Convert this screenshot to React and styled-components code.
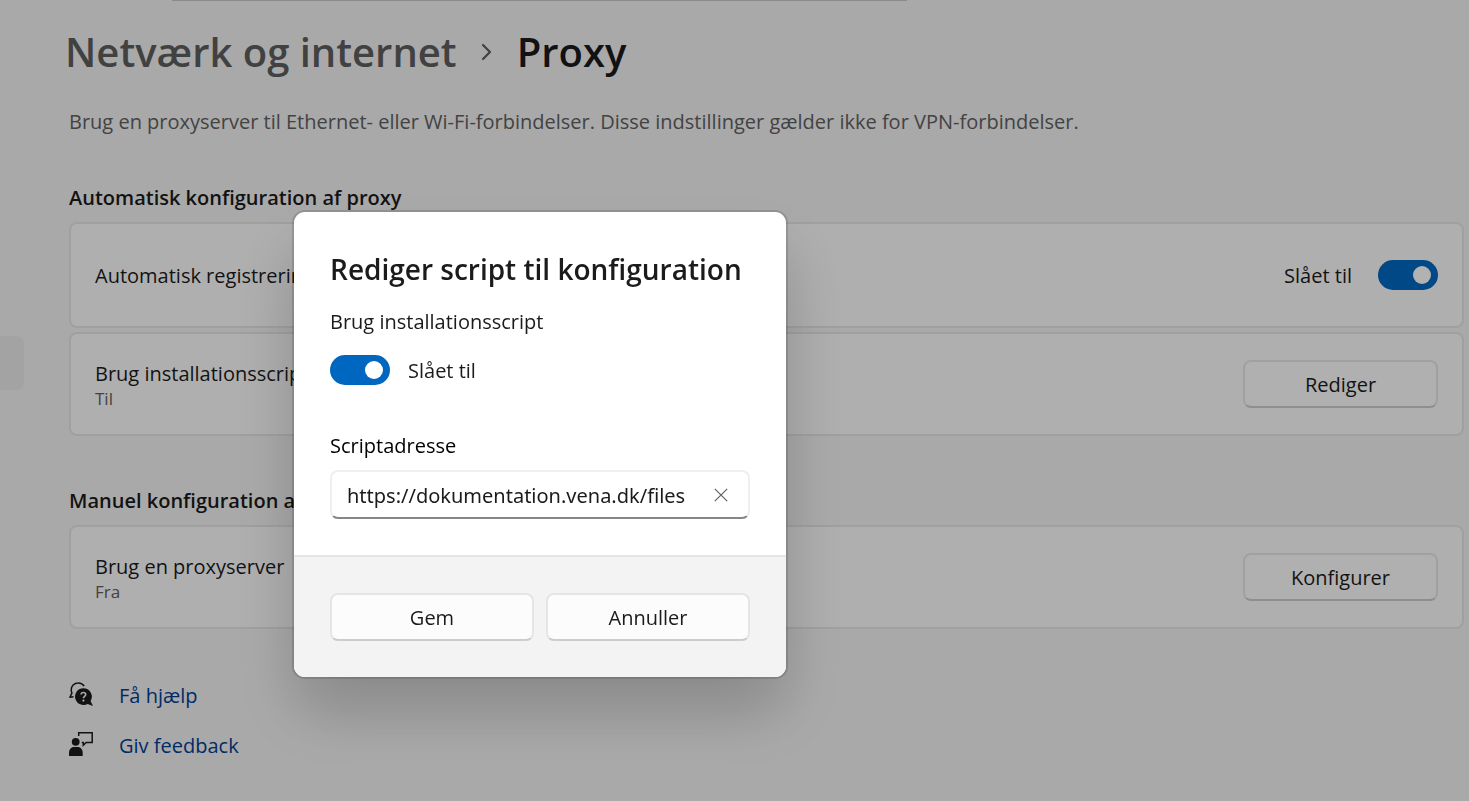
import React, { useState } from 'react';
import styled, { createGlobalStyle, css } from 'styled-components';

const GlobalStyle = createGlobalStyle`
  * {
    box-sizing: border-box;
  }

  body {
    margin: 0;
    background: #f3f3f3;
    color: #1b1b1b;
    font-family: 'Open Sans', 'Noto Sans', sans-serif;
    font-size: 20px;
    line-height: 28px;
  }

  button,
  input {
    font: inherit;
    color: inherit;
  }
`;

const Shell = styled.div`
  display: grid;
  grid-template-columns: 24px minmax(0, 1fr);
  grid-template-rows: 1px 1fr;
  min-height: 100vh;
  overflow: hidden;
`;

const SearchEdge = styled.div`
  grid-column: 1 / -1;
  width: 50%;
  margin-left: 172px;
  background: #c6c6c6;
`;

const Sidebar = styled.nav`
  padding-top: 335px;
`;

const SidebarItem = styled.div`
  height: 54px;
  border-radius: 0 8px 8px 0;
  background: #eaeaea;
`;

const Main = styled.main`
  padding: 23px 5px 16px 45px;
`;

const Breadcrumb = styled.h1`
  display: flex;
  align-items: center;
  gap: 24px;
  margin: 0 0 28px -4px;
  font-size: 40px;
  font-weight: 600;
  line-height: 56px;

  a {
    color: #5e5e5e;
    text-decoration: none;
  }
`;

const Description = styled.p`
  margin: 0 0 48px;
  color: #606060;
`;

const Section = styled.section`
  margin-bottom: 51px;
`;

const SectionTitle = styled.h2`
  margin: 0 0 10px;
  font-size: 20px;
  font-weight: 600;
  line-height: 28px;
`;

const CardList = styled.div`
  display: flex;
  flex-direction: column;
  gap: 4px;
`;

const Card = styled.div`
  display: flex;
  align-items: center;
  justify-content: space-between;
  min-height: ${({ $tall }) => ($tall ? '106px' : '104px')};
  padding: 24px;
  border: 2px solid #e5e5e5;
  border-radius: 8px;
  background: #fbfbfb;
`;

const CardText = styled.div`
  padding-top: 2px;
`;

const CardSub = styled.div`
  color: #606060;
  font-size: 17px;
  line-height: 22px;
`;

const SwitchLabel = styled.label`
  display: flex;
  align-items: center;
  gap: ${({ $gap }) => $gap};
`;

const SwitchText = styled.span`
  padding-top: 2px;
`;

const Switch = styled.input`
  display: flex;
  align-items: center;
  width: 60px;
  height: 30px;
  margin: 0;
  padding: 0 7px;
  border-radius: 15px;
  background: #8a8a8a;
  appearance: none;
  cursor: pointer;

  &::before {
    content: '';
    width: 18px;
    height: 18px;
    border-radius: 50%;
    background: #ffffff;
  }

  &:checked {
    justify-content: flex-end;
    background: #0067c0;
  }
`;

const buttonLook = css`
  height: 48px;
  padding: 1px 12px 0;
  border: 2px solid #e5e5e5;
  border-bottom-color: #cccccc;
  border-radius: 8px;
  background: #fcfcfc;
  cursor: pointer;
`;

const CardButton = styled.button`
  ${buttonLook}
  width: 195px;
`;

const HelpLinks = styled.div`
  display: flex;
  flex-direction: column;
  gap: 22px;
  padding-top: 2px;
`;

const HelpLink = styled.a`
  display: flex;
  align-items: flex-start;
  gap: 26px;
  width: max-content;
  color: #003e92;
  text-decoration: none;

  svg {
    color: #1b1b1b;
  }
`;

const Overlay = styled.div`
  position: fixed;
  inset: 0;
  padding: 212px 0 0 294px;
  background: rgba(0, 0, 0, 0.3);
`;

const Dialog = styled.form`
  width: 492px;
  overflow: hidden;
  border-radius: 11px;
  background: #ffffff;
  box-shadow:
    0 0 0 2px rgba(0, 0, 0, 0.14),
    0 36px 64px rgba(0, 0, 0, 0.2);
`;

const DialogBody = styled.div`
  padding: 37px 36px 36px;
`;

const DialogTitle = styled.h2`
  margin: 0 0 19px;
  font-size: 28px;
  font-weight: 600;
  line-height: 40px;
  white-space: nowrap;
`;

const SwitchCaption = styled.div`
  margin-bottom: 19px;
`;

const FieldLabel = styled.label`
  display: block;
  margin: 47px 0 10px;
  color: #000000;
`;

const Field = styled.div`
  display: flex;
  align-items: center;
  height: 49px;
  padding: 0 12px 0 15px;
  border: 2px solid #efefef;
  border-bottom-color: #868686;
  border-radius: 8px;
`;

const FieldInput = styled.input`
  flex: 1;
  min-width: 0;
  padding: 2px 0 0;
  border: 0;
  outline: 0;
  background: transparent;
  font-family: 'Noto Sans', sans-serif;
`;

const ClearButton = styled.button`
  display: flex;
  padding: 8px;
  margin-left: 14px;
  border: 0;
  background: transparent;
  color: #5f5f5f;
`;

const DialogFooter = styled.div`
  display: grid;
  grid-template-columns: 1fr 1fr;
  gap: 12px;
  padding: 36px;
  border-top: 2px solid #e5e5e5;
  background: #f3f3f3;
`;

const DialogButton = styled.button`
  ${buttonLook}
`;

const ChevronIcon = () => (
  <svg width="12" height="18" viewBox="0 0 12 18" fill="none" stroke="#5e5e5e" strokeWidth="2.2" strokeLinecap="round" strokeLinejoin="round" aria-hidden="true">
    <path d="M2 2l7 7-7 7" />
  </svg>
);

const ClearIcon = () => (
  <svg width="14" height="14" viewBox="0 0 14 14" fill="none" stroke="currentColor" strokeWidth="1.2" aria-hidden="true">
    <path d="M.8.8l12.4 12.4M13.2.8.8 13.2" />
  </svg>
);

const HelpIcon = () => (
  <svg width="24" height="24" viewBox="0 0 24 24" fill="none" aria-hidden="true">
    <path d="M15.2 4.2A6.7 6.7 0 0 0 9.2.9C5 .9 2.2 4.200 2.200 7.800c0 1.300.3 2.300.7 3.300L.9 15.300l3.600-.5" stroke="currentColor" strokeWidth="1.5" strokeLinejoin="round" />
    <path d="M14.3 6.2a8.4 8.4 0 0 1 7.3 12.7L24 23.9l-5.4-2A8.4 8.4 0 1 1 14.3 6.2Z" fill="currentColor" />
    <path d="M12.1 12.6c0-1.4 1-2.1 2.3-2.1s2.3.8 2.3 2c0 1.9-2.3 1.8-2.3 3.7" stroke="#f3f3f3" strokeWidth="1.6" />
    <circle cx="14.4" cy="18.6" r="1.1" fill="#f3f3f3" />
  </svg>
);

const FeedbackIcon = () => (
  <svg width="24" height="24" viewBox="0 0 24 24" fill="none" aria-hidden="true">
    <circle cx="6.7" cy="9.8" r="3.9" fill="currentColor" />
    <path d="M0 24v-3c0-3.6 2-6 5-6h3.7c3 0 5 2.4 5 6v3Z" fill="currentColor" />
    <path d="M9.7 4V.8h13.5v9.7h-6l-2.9 2.7v-2.7h-1.5" stroke="currentColor" strokeWidth="1.5" />
  </svg>
);

const App = () => {
  const [autoDetect, setAutoDetect] = useState(true);
  const [useScript, setUseScript] = useState(true);
  const [address, setAddress] = useState('https://dokumentation.vena.dk/files');

  return (
    <>
      <GlobalStyle />
      <Shell>
        <SearchEdge />
        <Sidebar>
          <SidebarItem />
        </Sidebar>
        <Main>
          <Breadcrumb>
            <a href="#network">Netværk og internet</a>
            <ChevronIcon />
            <span>Proxy</span>
          </Breadcrumb>
          <Description>
            Brug en proxyserver til Ethernet- eller Wi-Fi-forbindelser. Disse indstillinger gælder ikke for VPN-forbindelser.
          </Description>

          <Section>
            <SectionTitle>Automatisk konfiguration af proxy</SectionTitle>
            <CardList>
              <Card $tall>
                <CardText id="auto-detect">Automatisk registrering</CardText>
                <SwitchLabel $gap="26px">
                  <SwitchText>{autoDetect ? 'Slået til' : 'Slået fra'}</SwitchText>
                  <Switch
                    type="checkbox"
                    role="switch"
                    aria-describedby="auto-detect"
                    checked={autoDetect}
                    onChange={(e) => setAutoDetect(e.target.checked)}
                  />
                </SwitchLabel>
              </Card>
              <Card>
                <CardText>
                  Brug installationsscript
                  <CardSub>Til</CardSub>
                </CardText>
                <CardButton type="button">Rediger</CardButton>
              </Card>
            </CardList>
          </Section>

          <Section>
            <SectionTitle>Manuel konfiguration af proxy</SectionTitle>
            <Card>
              <CardText>
                Brug en proxyserver
                <CardSub>Fra</CardSub>
              </CardText>
              <CardButton type="button">Konfigurer</CardButton>
            </Card>
          </Section>

          <HelpLinks>
            <HelpLink href="#help">
              <HelpIcon />
              Få hjælp
            </HelpLink>
            <HelpLink href="#feedback">
              <FeedbackIcon />
              Giv feedback
            </HelpLink>
          </HelpLinks>
        </Main>
      </Shell>

      <Overlay>
        <Dialog role="dialog" aria-labelledby="dialog-title" onSubmit={(e) => e.preventDefault()}>
          <DialogBody>
            <DialogTitle id="dialog-title">Rediger script til konfiguration</DialogTitle>
            <SwitchCaption id="use-script">Brug installationsscript</SwitchCaption>
            <SwitchLabel $gap="18px">
              <Switch
                type="checkbox"
                role="switch"
                aria-describedby="use-script"
                checked={useScript}
                onChange={(e) => setUseScript(e.target.checked)}
              />
              <SwitchText>{useScript ? 'Slået til' : 'Slået fra'}</SwitchText>
            </SwitchLabel>
            <FieldLabel htmlFor="script-address">Scriptadresse</FieldLabel>
            <Field>
              <FieldInput
                id="script-address"
                type="text"
                spellCheck={false}
                value={address}
                onChange={(e) => setAddress(e.target.value)}
              />
              <ClearButton type="button" aria-label="Ryd" onClick={() => setAddress('')}>
                <ClearIcon />
              </ClearButton>
            </Field>
          </DialogBody>
          <DialogFooter>
            <DialogButton type="submit">Gem</DialogButton>
            <DialogButton type="button">Annuller</DialogButton>
          </DialogFooter>
        </Dialog>
      </Overlay>
    </>
  );
};

export default App;
